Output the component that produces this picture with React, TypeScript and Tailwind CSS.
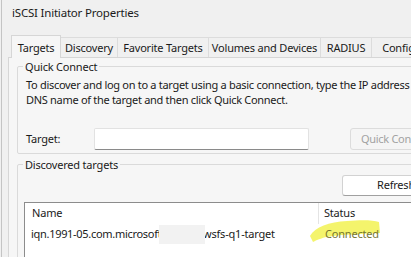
import React from "react";

const tabs = [
  { label: "Targets", w: "w-[50px]" },
  { label: "Discovery", w: "w-[57px]" },
  { label: "Favorite Targets", w: "w-[91px]" },
  { label: "Volumes and Devices", w: "w-[112px]" },
  { label: "RADIUS", w: "w-[51px]" },
  { label: "Configuration", w: "w-[90px]" },
];

export default function App() {
  return (
    <div className="w-[411px] h-[257px] overflow-hidden bg-[#f0f0f0] font-['Noto_Sans',sans-serif] text-[11px] tracking-[-0.2px] text-[#1a1a1a]">
      <div className="h-full ml-px border-l border-[#c4c4c4] flex flex-col">
        {/* TITLE */}
        <div className="h-[28px] pl-[10px] pt-[5px] text-[11.5px] leading-[16px] shrink-0">
          iSCSI Initiator Properties
        </div>

        {/* TABS */}
        <div className="flex items-end pl-[9px] h-[29px] shrink-0 whitespace-nowrap">
          {tabs.map((t, i) =>
            i === 0 ? (
              <div
                key={t.label}
                className={`${t.w} h-[23px] shrink-0 bg-[#f6f6f6] border border-b-0 border-[#d6d6d6] flex items-center justify-center leading-none relative z-10 -mb-px`}
              >
                {t.label}
              </div>
            ) : (
              <div
                key={t.label}
                className={`${t.w} h-[20px] shrink-0 border-t border-r border-[#dcdcdc] flex items-center justify-center leading-none`}
              >
                {t.label}
              </div>
            )
          )}
        </div>

        {/* PANEL */}
        <div className="flex-1 ml-[6px] border-l border-t border-[#d6d6d6] bg-[#f6f6f6] pl-[8px] pt-[8px] whitespace-nowrap">
          {/* Quick Connect */}
          <div className="relative w-[460px] h-[88px] border border-[#dadada] rounded-[2px]">
            <div className="absolute -top-[8px] left-[5px] px-[2px] bg-[#f6f6f6] leading-[15px]">
              Quick Connect
            </div>
            <div className="pl-[8px] pt-[10px] leading-[15px] tracking-[-0.3px]">
              <div>To discover and log on to a target using a basic connection, type the IP address or</div>
              <div>DNS name of the target and then click Quick Connect.</div>
            </div>
            <div className="flex items-center pl-[8px] mt-[21px]">
              <div className="w-[68px]">Target:</div>
              <div className="w-[215px] h-[22px] bg-white border border-[#e2e2e2] border-b-[#8a8a8a] rounded-[2px]" />
              <div className="ml-[41px] w-[100px] h-[22px] border border-[#dcdcdc] rounded-[3px] bg-[#f5f5f5] text-[#a2a2a2] tracking-[-0.3px] flex items-center pl-[10px]">
                Quick Connect
              </div>
            </div>
          </div>

          {/* Discovered targets */}
          <div className="relative w-[460px] h-[120px] mt-[10px] border border-[#dadada] rounded-[2px]">
            <div className="absolute -top-[8px] left-[5px] px-[2px] bg-[#f6f6f6] leading-[15px]">
              Discovered targets
            </div>
            <div className="flex pt-[10px] pl-[324px]">
              <div className="w-[108px] h-[21px] bg-white border border-[#d2d2d2] border-b-[#a0a0a0] rounded-[3px] flex items-center justify-center">
                Refresh
              </div>
            </div>
            <div className="ml-[6px] mt-[6px] h-[80px] bg-white border border-[#8c8c8c]">
              <div className="flex h-[21px] items-center">
                <div className="w-[294px] pl-[7px] h-full flex items-center border-r border-[#e4e4e4]">Name</div>
                <div className="pl-[5px]">Status</div>
              </div>
              <div className="flex h-[20px] items-center">
                <div className="w-[294px] pl-[6px] flex items-center">
                  <span className="inline-block w-[128px] overflow-hidden tracking-[-0.3px]">iqn.1991-05.com.microsoft.com:</span>
                  <span className="inline-block w-[46px] h-[19px] bg-[#f2f2f2] relative z-10" />
                  <span className="-ml-[2px]">wsfs-q1-target</span>
                </div>
                <div className="relative pl-[6px]">
                  <svg
                    className="absolute -left-[12px] -top-[9px]"
                    width="76"
                    height="26"
                    viewBox="0 0 76 26"
                  >
                    <path
                      d="M3 19 C 8 10, 22 5, 40 4 C 54 3, 66 3, 72 5 L 73 16 C 60 17, 42 17, 26 19 C 16 20, 10 23, 6 25 Z"
                      fill="#f3f35c"
                      opacity="0.9"
                    />
                  </svg>
                  <span className="relative text-[#76762e]">Connected</span>
                </div>
              </div>
            </div>
          </div>
        </div>
      </div>
    </div>
  );
}
